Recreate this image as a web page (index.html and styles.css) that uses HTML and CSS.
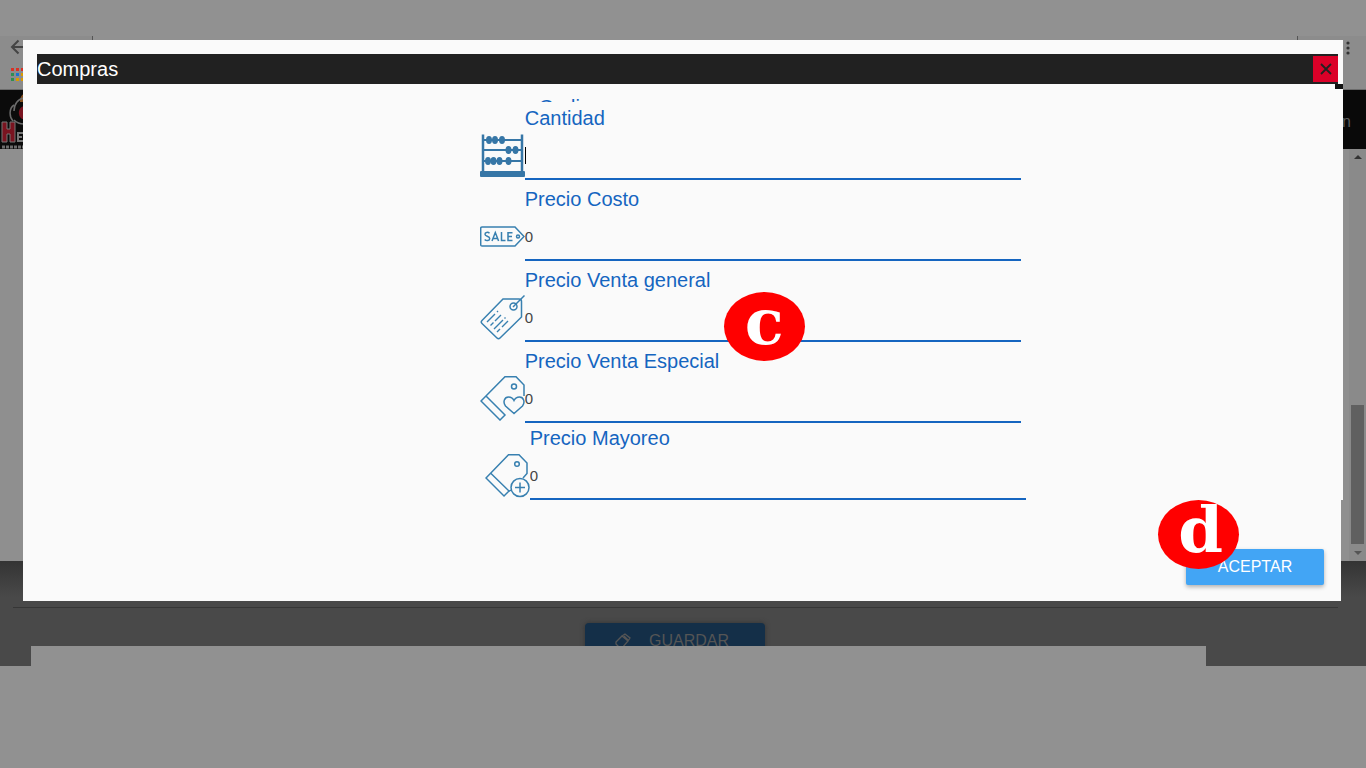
FILE: index.html
```html
<!DOCTYPE html>
<html lang="es">
<head>
<meta charset="utf-8">
<title>Compras</title>
<link rel="stylesheet" href="styles.css">
</head>
<body>
<div class="page">
  <div class="topstrip"></div>
  <div class="browser">
    <div class="tabs"></div>
    <svg class="tools" viewBox="0 0 24 54" aria-hidden="true">
      <path d="M24 11H12M18.500 4.500L12 11l6.500 6.500" fill="none" stroke="#444" stroke-width="2"/>
      <path d="M11 32h3v3h-3zM16 32h3v3h-3zM21 32h3v3h-3z" fill="#d93025"/>
      <path d="M11 37h3v3h-3zM11 42h3v3h-3z" fill="#2f8f50"/>
      <path d="M16 37h3v3h-3z" fill="#1a73d0"/>
      <path d="M21 37h3v3h-3zM16 42h3v3h-3zM21 42h3v3h-3z" fill="#d99a00"/>
    </svg>
    <svg class="kebab" viewBox="0 0 4 16" aria-hidden="true"><g fill="#333"><circle cx="2" cy="3" r="1.6"/><circle cx="2" cy="8" r="1.6"/><circle cx="2" cy="13" r="1.6"/></g></svg>
  </div>
  <nav class="nav">
    <svg class="logo" viewBox="0 0 24 59" aria-hidden="true">
      <rect width="24" height="59" fill="#0b0b0b"/>
      <path d="M24 4c-3 1-4 4-4 8h4z" fill="#875020"/>
      <path d="M24 8c-6 1-10 6-10 13M14 15c-5 3-5 12-1 16M14 30c3 3 6 4 10 4" fill="none" stroke="#6c6c6c" stroke-width="1.500"/>
      <path d="M24 16c-6 1-7 10-2 13h2z" fill="#7a1420"/>
      <path d="M2 32h5v7h3v-7h5v20h-5v-8H7v8H2z" fill="#7a1420" stroke="#777"/>
      <path d="M23 43h-5v8h5M18 47h4" fill="none" stroke="#777" stroke-width="2"/>
      <path d="M2 57h22" stroke="#6c6c6c" stroke-width="3" stroke-dasharray="3 1"/>
    </svg>
    <span>n</span>
  </nav>
  <main class="content">
    <div class="scroll">
      <i class="up"></i>
      <i class="thumb"></i>
      <i class="down"></i>
    </div>
  </main>
  <section class="dark">
    <hr class="rule">
    <div class="saverow">
      <button class="save" type="button">
        <svg viewBox="0 0 16 16" aria-hidden="true"><path d="M1 9l6-6 6 5-6 7H5L1 11zM7 3l3-2 5 4-2 3M9 3l4 4" fill="none" stroke="currentColor" stroke-width="1.3"/></svg>
        <span>GUARDAR</span>
      </button>
    </div>
    <div class="patch"></div>
  </section>
</div>

<div class="modal" role="dialog" aria-labelledby="title">
  <div class="upper">
    <header class="bar">
      <h1 id="title">Compras</h1>
      <button class="close" type="button" aria-label="Cerrar">
        <svg viewBox="0 0 12 12" aria-hidden="true"><path d="M1 1l10 10M11 1L1 11" stroke="#222" stroke-width="1.8"/></svg>
      </button>
    </header>
    <div class="notch"></div>
    <form class="form">
      <div class="peek">Codigo</div>
      <div class="field">
        <svg class="icon" viewBox="0 0 45 45" aria-hidden="true">
          <g fill="none" stroke="#3676a6" stroke-width="2"><path d="M3 7h39M3 17h39M3 28h39"/><path d="M3 1.500v38M42 1.500v38" stroke-width="2.500"/></g>
          <rect y="38" width="45" height="6" rx="1" fill="#3676a6"/>
          <g fill="#3676a6"><ellipse cx="9" cy="7" rx="3" ry="4"/><ellipse cx="15" cy="7" rx="3" ry="4"/><ellipse cx="22" cy="7" rx="3" ry="4"/><ellipse cx="28.500" cy="17" rx="3" ry="4"/><ellipse cx="35.500" cy="17" rx="3" ry="4"/><ellipse cx="8" cy="28" rx="3" ry="4"/><ellipse cx="13.500" cy="28" rx="3" ry="4"/><ellipse cx="19.500" cy="28" rx="3" ry="4"/><ellipse cx="28.500" cy="28" rx="3" ry="4"/></g>
        </svg>
        <label for="cantidad">Cantidad</label>
        <input id="cantidad" type="text">
        <span class="caret"></span>
      </div>
      <div class="field">
        <svg class="icon" viewBox="0 0 45 45" aria-hidden="true">
          <g fill="none" stroke="#3880b0" stroke-width="1.5"><path d="M2 13h33l9 9.500L35 32H2q-1.300 0-1.300-1.300V14.300Q.7 13 2 13z"/><circle cx="38" cy="22.500" r="1.500"/>
          <path d="M9.500 19.200c-1.500-1.400-4.500-1-4.500 1 0 2.500 4.700 1.500 4.700 4.300 0 2.500-3.500 2.700-5 1M12 27l3.300-8.500L18.600 27M13.200 24.500h4.200M21.500 18v8.500h4M32.500 18.700h-4.500v7.800h4.500M28 22.500h4" stroke-width="1.500"/></g>
        </svg>
        <label for="costo">Precio Costo</label>
        <input id="costo" type="text" value="0">
      </div>
      <div class="field">
        <svg class="icon" viewBox="0 0 45 45" aria-hidden="true">
          <g fill="none" stroke="#3880b0" stroke-width="1.500"><path d="M23 4h16q2.500 0 2.500 2.500V22L20 43q-1.500 1.500-3 0L2 28.500q-1.500-1.500 0-3z"/><circle cx="33.500" cy="11.500" r="3.500"/><path d="M33 12L44.500.5"/>
          <path d="M7 27l8-8M17 17l1-1M10.500 30.500l3-3M15 26l6-6M14 34l9-9M24.500 23.500l1-1M17 37l3-3M22 32l6-6" stroke-width="1.400"/></g>
        </svg>
        <label for="general">Precio Venta general</label>
        <input id="general" type="text" value="0">
        <span class="marker marker-c">c</span>
      </div>
      <div class="field">
        <svg class="icon" viewBox="0 0 45 45" aria-hidden="true">
          <g fill="none" stroke="#3880b0" stroke-width="1.500"><path d="M44 20V9l-8-8.300H25L1 25l19 19 5-5L6.500 20.500"/><circle cx="34" cy="10.500" r="2.500"/><path d="M34 37.500l-8.500-7.500c-3-4-1-9 3-9 3 0 4.500 1.500 5.500 3.500 1-2 2.500-3.500 5.500-3.500 4 0 6 5 3 9z"/></g>
        </svg>
        <label for="especial">Precio Venta Especial</label>
        <input id="especial" type="text" value="0">
      </div>
      <div class="field field-last">
        <svg class="icon" viewBox="0 0 45 45" aria-hidden="true">
          <g fill="none" stroke="#3880b0" stroke-width="1.500"><path d="M38 25l4-4.500V10l-8-8.300H23.500L1 25l18 18 5-5L6 20.500M23 39l3-2"/><circle cx="32" cy="11" r="2.300"/><circle cx="35" cy="34.500" r="9"/><path d="M35 29.500v10M30 34.500h10"/></g>
        </svg>
        <label for="mayoreo">Precio Mayoreo</label>
        <input id="mayoreo" type="text" value="0">
      </div>
    </form>
  </div>
  <footer class="lower">
    <button class="accept" type="button">ACEPTAR</button>
    <span class="marker marker-d">d</span>
  </footer>
</div>
</body>
</html>
```
FILE: styles.css
```css
* { box-sizing: border-box; }
body { margin: 0; font-family: "Liberation Sans", Arial, sans-serif; background: #919191; }
.page { min-height: 100vh; overflow: hidden; }
.topstrip { height: 36px; background: #919191; }
.browser { height: 54px; background: #8c8c8c; border-bottom: 1px solid #6b6b6b; display: flex; position: relative; }
.tabs { position: absolute; top: 0; left: 92px; right: 68px; height: 4px; background: #919191; border: solid #555; border-width: 0 1px; }
.tools { width: 24px; height: 54px; }
.kebab { width: 4px; height: 16px; margin: 4px 16px 0 auto; }
.nav { height: 59px; background: #090909; display: flex; align-items: center; justify-content: space-between; padding-right: 15px; color: #5c5c5c; font-size: 16px; line-height: 24px; }
.logo { width: 24px; height: 59px; }
.nav span { padding-top: 5px; }
.content { height: 412px; background: #8f8f8f; display: flex; justify-content: flex-end; }
.scroll { width: 17px; background: #8a8a8a; display: flex; flex-direction: column; align-items: center; padding: 6px 0; }
.up, .down { border: 4px solid transparent; }
.up { border-bottom-color: #333; border-top: 0; }
.down { border-top-color: #555; border-bottom: 0; }
.thumb { width: 13px; height: 139px; background: #606060; margin: auto 0 7px; }
.dark { background: linear-gradient(#343434, #494949 36px); }
.rule { margin: 0 28px 0 13px; border: 0; height: 47px; border-bottom: 1px solid #363636; }
.saverow { height: 38px; padding-top: 15px; overflow: hidden; display: flex; justify-content: center; padding-right: 16px; }
.save { flex: none; width: 180px; height: 36px; border: 0; border-radius: 4px; background: #142f48; color: #555; font: 16px/24px "Liberation Sans", Arial, sans-serif; display: flex; align-items: center; justify-content: center; gap: 18px; padding: 0 6px 0 0; box-shadow: 0 0 5px #333; }
.save svg { width: 16px; height: 16px; }
.patch { height: 20px; margin: 0 160px 0 31px; background: #919191; }

.modal { position: absolute; top: 40px; left: 23px; right: 23px; }
.upper { background: #fafafa; padding-top: 14px; }
.bar { height: 30px; margin: 0 5px 0 14px; background: #212121; display: flex; align-items: center; justify-content: space-between; }
.bar h1 { margin: 0; font-size: 20px; line-height: 24px; font-weight: 400; color: #fff; }
.close { width: 25px; height: 26px; padding: 0; border: 0; background: #db0028; display: flex; align-items: center; justify-content: center; }
.close svg { width: 12px; height: 12px; }
.notch { width: 8px; height: 5px; margin-left: auto; background: #111; }
.form { padding: 7px 24.4% 0 34.6%; }
.peek { height: 6px; margin: 0 0 -3px 59px; overflow: hidden; font-size: 20px; line-height: 22px; color: #1565c0; }
.field { display: grid; grid-template-columns: 45px 1fr; padding-top: 7px; position: relative; }
.field-last { padding-top: 3px; margin: 0 -5px 0 5px; }
.icon { width: 45px; height: 45px; grid-row: 1 / 3; align-self: end; margin-bottom: 2px; }
.field label { font-size: 20px; line-height: 24px; color: #1565c0; }
.field input { grid-column: 2; width: 100%; height: 50px; border: 0; border-bottom: 2px solid #1565c0; padding: 2px 0 0; background: transparent; font: 15px "Liberation Sans", Arial, sans-serif; color: #444; outline: 0; }
.caret { position: absolute; left: 45px; top: 48px; width: 1px; height: 17px; background: #000; }
.lower { background: #fafafa; margin-right: 2px; padding: 49px 17px 16px; display: flex; justify-content: flex-end; position: relative; }
.accept { width: 138px; height: 36px; border: 0; border-radius: 2px; background: #42a5f5; color: #fff; font: 16px/24px "Liberation Sans", Arial, sans-serif; box-shadow: 0 2px 4px rgba(0,0,0,.3); }
.marker { position: absolute; width: 81px; height: 69px; border-radius: 50%; background: #f00; color: #fff; font: bold 64px/60px "DejaVu Serif", serif; text-align: center; }
.marker-c { left: 244px; top: 31px; }
.marker-d { right: 102px; top: 0; padding-left: 4px; }
```
